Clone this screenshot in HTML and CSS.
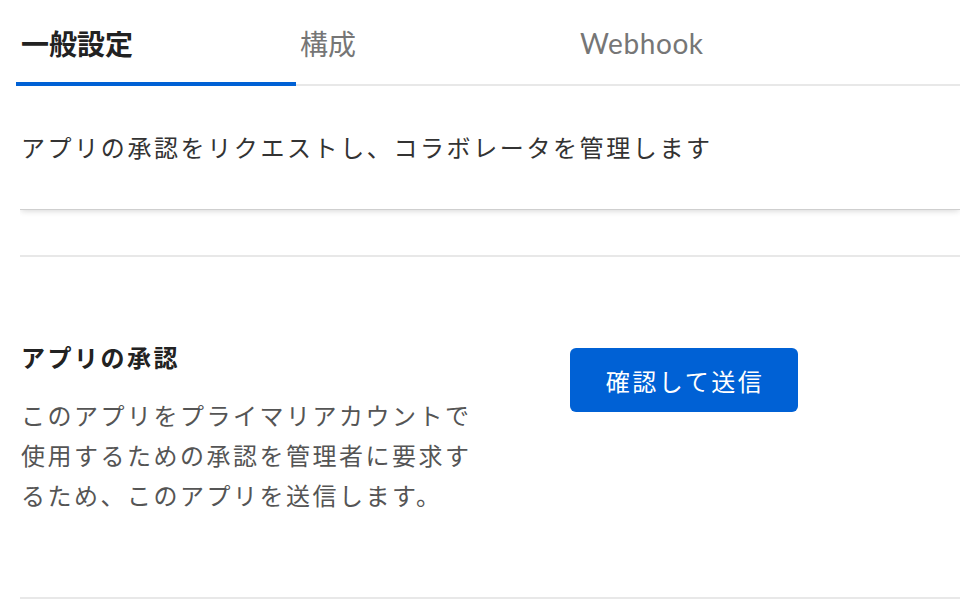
FILE: index.html
```html
<!DOCTYPE html>
<html lang="ja">
<head>
<meta charset="utf-8">
<link rel="stylesheet" href="styles.css">
</head>
<body>
<div class="page">
  <nav class="tabs">
    <div class="tab active">一般設定</div>
    <div class="tab">構成</div>
    <div class="tab">Webhook</div>
  </nav>
  <div class="content">
    <header class="intro">
      <p class="intro-text">アプリの承認をリクエストし、コラボレータを管理します</p>
    </header>
    <section class="row">
      <div class="row-info">
        <h2 class="row-title">アプリの承認</h2>
        <p class="row-desc">このアプリをプライマリアカウントで使用するための承認を管理者に要求するため、このアプリを送信します。</p>
      </div>
      <div class="row-action">
        <button class="btn-primary" type="button">確認して送信</button>
      </div>
    </section>
  </div>
</div>
</body>
</html>
```

FILE: styles.css
```css
html, body {
  margin: 0;
  padding: 0;
  background: #fff;
}

body {
  font-family: Lato, "Noto Sans CJK JP", sans-serif;
  color: #222;
  overflow: hidden;
}

.page {
  width: 960px;
  height: 610px;
}

.tabs {
  display: flex;
  margin-left: 16px;
  height: 84px;
  border-bottom: 2px solid #e8e8e8;
}

.tab {
  box-sizing: border-box;
  width: 280px;
  height: 86px;
  padding: 4px 0 0 5px;
  display: flex;
  align-items: center;
  font-size: 28px;
  color: #767676;
  border-bottom: 4px solid transparent;
}

.tab.active {
  color: #222;
  font-weight: 700;
  border-bottom-color: #0061d5;
}

.tab + .tab {
  width: 280px;
  padding-left: 4px;
}

.tab:last-child {
  letter-spacing: 0.6px;
}

.content {
  margin-left: 20px;
}

.intro {
  height: 123px;
  display: flex;
  align-items: center;
  box-shadow: 0 1px 0 #cfcfcf, 0 3px 6px -1px rgba(0, 0, 0, 0.16);
  clip-path: inset(0 -20px -12px 0);
}

.intro-text {
  margin: 0 0 0 1px;
  font-size: 24px;
  letter-spacing: 2.6px;
  color: #333;
  padding-bottom: 2px;
}

.row {
  margin-top: 46px;
  height: 340px;
  border-top: 2px solid #e8e8e8;
  border-bottom: 2px solid #e8e8e8;
  display: flex;
  align-items: center;
  gap: 79px;
}

.row-info {
  width: 470px;
  padding-left: 1px;
  padding-top: 4px;
}

.row-title {
  margin: 0 0 22px;
  font-size: 24px;
  font-weight: 700;
  letter-spacing: 2.5px;
  line-height: 32px;
  color: #222;
}

.row-desc {
  margin: 0;
  font-size: 24px;
  letter-spacing: 2.5px;
  line-height: 40px;
  color: #555;
}

.row-action {
  align-self: flex-start;
  padding-top: 91px;
}

.btn-primary {
  width: 228px;
  height: 64px;
  border: none;
  border-radius: 6px;
  background: #0061d5;
  color: #fff;
  font-family: Lato, "Noto Sans CJK JP", sans-serif;
  font-size: 24px;
  letter-spacing: 2.5px;
  padding: 0 0 0 2px;
  cursor: pointer;
}
```
